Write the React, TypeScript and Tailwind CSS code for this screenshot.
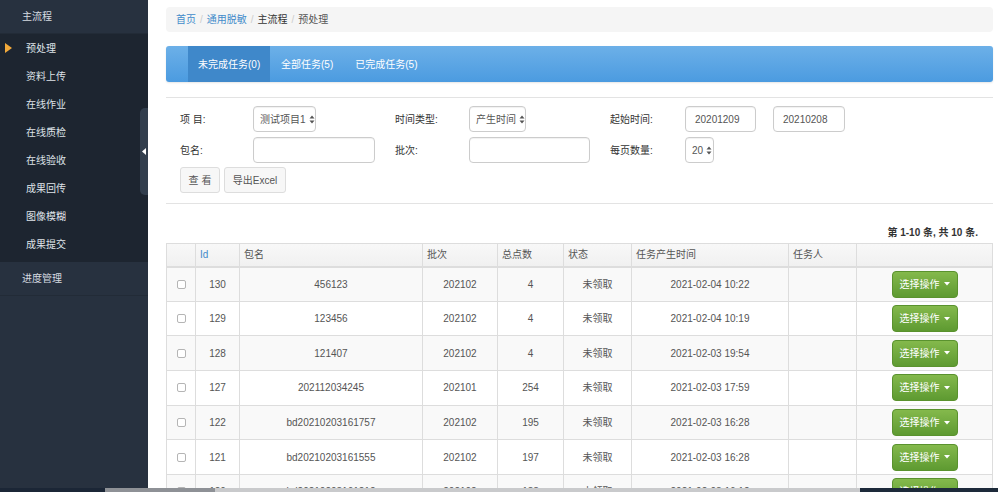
import { ChevronDown } from "lucide-react";

const font = "font-['Liberation_Sans','Noto_Sans_CJK_SC',sans-serif]";

const menu = ["预处理", "资料上传", "在线作业", "在线质检", "在线验收", "成果回传", "图像模糊", "成果提交"];

const rows = [
  { id: 130, name: "456123", batch: "202102", pts: 4, time: "2021-02-04 10:22" },
  { id: 129, name: "123456", batch: "202102", pts: 4, time: "2021-02-04 10:19" },
  { id: 128, name: "121407", batch: "202102", pts: 4, time: "2021-02-03 19:54" },
  { id: 127, name: "202112034245", batch: "202101", pts: 254, time: "2021-02-03 17:59" },
  { id: 122, name: "bd20210203161757", batch: "202102", pts: 195, time: "2021-02-03 16:28" },
  { id: 121, name: "bd20210203161555", batch: "202102", pts: 197, time: "2021-02-03 16:28" },
  { id: 120, name: "bd20210203161212", batch: "202102", pts: 188, time: "2021-02-03 16:12" },
];

function Arrows() {
  return (
    <svg width="6" height="9" viewBox="0 0 6 9" className="ml-[3px] shrink-0">
      <path d="M3 0.5 L5.5 3.5 H0.5 Z M3 8.5 L5.5 5.5 H0.5 Z" fill="#555" />
    </svg>
  );
}

function SelectBox({ label, w }: { label: string; w: string }) {
  return (
    <div className={`${w} h-[26px] border border-[#ccc] rounded-[4px] flex items-center pl-[6px] whitespace-nowrap text-[10px] text-[#555] shadow-[inset_0_1px_1px_rgba(0,0,0,0.06)]`}>
      {label}
      <Arrows />
    </div>
  );
}

function TextBox({ value, w }: { value?: string; w: string }) {
  return (
    <div className={`${w} h-[26px] border border-[#ccc] rounded-[4px] flex items-center px-[9px] text-[10px] text-[#555] shadow-[inset_0_1px_1px_rgba(0,0,0,0.06)]`}>
      {value}
    </div>
  );
}

export default function App() {
  return (
    <div className={`${font} relative flex w-[998px] h-[492px] overflow-hidden bg-white`}>
      {/* sidebar */}
      <aside className="w-[148px] shrink-0 bg-[#27313f] flex flex-col">
        <div className="h-[34px] pl-[22px] flex items-center text-[10px] text-[#d6dbe1] border-b border-[#222b37]">主流程</div>
        <div className="bg-[#1d2530] pb-[4px]">
          {menu.map((m, i) => (
            <div key={m} className="relative h-[28px] pl-[26px] flex items-center text-[10px] text-[#dfe3e8]">
              {i === 0 && (
                <svg width="7" height="10" viewBox="0 0 7 10" className="absolute left-[5px] top-[9px]">
                  <path d="M0 0 L7 5 L0 10 Z" fill="#f2a93b" />
                </svg>
              )}
              {m}
            </div>
          ))}
        </div>
        <div className="h-[34px] pl-[22px] flex items-center text-[10px] text-[#d6dbe1] border-b border-[#222b37]">进度管理</div>
      </aside>

      {/* collapse tab */}
      <div className="absolute left-[140px] top-[108px] w-[8px] h-[87px] bg-[#323e4d] rounded-l-[5px] flex items-center justify-center">
        <svg width="4" height="7" viewBox="0 0 4 7">
          <path d="M4 0 L0 3.5 L4 7 Z" fill="#fff" />
        </svg>
      </div>

      {/* main */}
      <main className="flex-1 pl-[18px] pr-[6px] pt-[7px]">
        <div className="h-[25px] bg-[#f5f5f5] rounded-[4px] pl-[10px] flex items-center text-[10px]">
          <span className="text-[#428bca]">首页</span>
          <span className="text-[#ccc] px-[4px]">/</span>
          <span className="text-[#428bca]">通用脱敏</span>
          <span className="text-[#ccc] px-[4px]">/</span>
          <span className="text-[#333]">主流程</span>
          <span className="text-[#ccc] px-[4px]">/</span>
          <span className="text-[#555]">预处理</span>
        </div>

        <div className="mt-[14px] h-[36px] rounded-[3px] bg-gradient-to-b from-[#6cb0e8] to-[#4b9be0] pl-[22px] flex text-[10px] text-white shadow-[0_1px_2px_rgba(0,0,0,0.1)]">
          <div className="bg-[#3f88ca] w-[82px] pl-[10px] flex items-center">未完成任务(0)</div>
          <div className="px-[11px] flex items-center">全部任务(5)</div>
          <div className="px-[11px] flex items-center">已完成任务(5)</div>
        </div>

        <div className="mt-[15px] border-t border-[#e3e3e3] pt-[8px] pb-[10px] pl-[14px] text-[10px] text-[#333]">
          <div className="flex items-center">
            <div className="w-[73px]">项 目:</div>
            <div className="w-[142px]"><SelectBox label="测试项目1" w="w-[63px]" /></div>
            <div className="w-[74px]">时间类型:</div>
            <div className="w-[141px]"><SelectBox label="产生时间" w="w-[57px]" /></div>
            <div className="w-[75px]">起始时间:</div>
            <TextBox value="20201209" w="w-[71px]" />
            <div className="w-[17px]" />
            <TextBox value="20210208" w="w-[72px]" />
          </div>
          <div className="flex items-center mt-[5px]">
            <div className="w-[73px]">包名:</div>
            <div className="w-[142px]"><TextBox w="w-[122px]" /></div>
            <div className="w-[74px]">批次:</div>
            <div className="w-[141px]"><TextBox w="w-[121px]" /></div>
            <div className="w-[75px]">每页数量:</div>
            <SelectBox label="20" w="w-[29px]" />
          </div>
          <div className="flex mt-[4px] gap-[4px]">
            <div className="w-[40px] h-[26px] border border-[#ddd] rounded-[3px] bg-[#f7f7f7] flex items-center justify-center text-[#555]">查 看</div>
            <div className="w-[62px] h-[26px] border border-[#ddd] rounded-[3px] bg-[#f7f7f7] flex items-center justify-center text-[#555]">导出Excel</div>
          </div>
        </div>

        <div className="border-t border-[#e3e3e3] pt-[21px] pr-[15px] text-right text-[10px] font-bold text-[#333]">
          第 1-10 条, 共 10 条.
        </div>

        <table className="mt-[3px] w-[826px] table-fixed border-collapse text-[10px] text-[#555]">
          <colgroup>
            <col className="w-[29px]" />
            <col className="w-[44px]" />
            <col className="w-[183px]" />
            <col className="w-[75px]" />
            <col className="w-[66px]" />
            <col className="w-[68px]" />
            <col className="w-[157px]" />
            <col className="w-[68px]" />
            <col className="w-[136px]" />
          </colgroup>
          <thead>
            <tr className="h-[23px] bg-gradient-to-b from-[#f8f8f8] to-[#f0f0f0] text-left">
              <th className="border border-[#ddd] border-b-2 font-normal" />
              <th className="border border-[#ddd] border-b-2 font-normal pl-[4px] text-[#428bca]">Id</th>
              <th className="border border-[#ddd] border-b-2 font-normal pl-[4px]">包名</th>
              <th className="border border-[#ddd] border-b-2 font-normal pl-[4px]">批次</th>
              <th className="border border-[#ddd] border-b-2 font-normal pl-[4px]">总点数</th>
              <th className="border border-[#ddd] border-b-2 font-normal pl-[4px]">状态</th>
              <th className="border border-[#ddd] border-b-2 font-normal pl-[4px]">任务产生时间</th>
              <th className="border border-[#ddd] border-b-2 font-normal pl-[4px]">任务人</th>
              <th className="border border-[#ddd] border-b-2 font-normal" />
            </tr>
          </thead>
          <tbody>
            {rows.map((r, i) => (
              <tr key={r.id} className={`h-[34.7px] text-center ${i % 2 === 0 ? "bg-[#f9f9f9]" : "bg-white"}`}>
                <td className="border border-[#ddd]">
                  <div className="mx-auto w-[9px] h-[9px] border border-[#b5b5b5] rounded-[2px] bg-white" />
                </td>
                <td className="border border-[#ddd]">{r.id}</td>
                <td className="border border-[#ddd]">{r.name}</td>
                <td className="border border-[#ddd]">{r.batch}</td>
                <td className="border border-[#ddd]">{r.pts}</td>
                <td className="border border-[#ddd]">未领取</td>
                <td className="border border-[#ddd]">{r.time}</td>
                <td className="border border-[#ddd]" />
                <td className="border border-[#ddd]">
                  <div className="mx-auto w-[66px] h-[27px] rounded-[4px] bg-gradient-to-b from-[#84b94c] to-[#5e9a31] border border-[#5a922e] flex items-center justify-center text-white text-[10px]">
                    选择操作
                    <ChevronDown size={0} className="hidden" />
                    <svg width="6" height="4" viewBox="0 0 6 4" className="ml-[4px]">
                      <path d="M0 0 H6 L3 3.5 Z" fill="#fff" />
                    </svg>
                  </div>
                </td>
              </tr>
            ))}
          </tbody>
        </table>
      </main>

      {/* desktop taskbar strip at bottom edge */}
      <div className="absolute left-0 bottom-0 w-full h-[4px] flex">
        <div className="w-[105px] bg-[#1b2636]" />
        <div className="w-[110px] bg-[#8e9196]" />
        <div className="w-[645px] bg-[#c9cacc]" />
        <div className="flex-1 bg-[#1d2a3a]" />
      </div>
    </div>
  );
}
